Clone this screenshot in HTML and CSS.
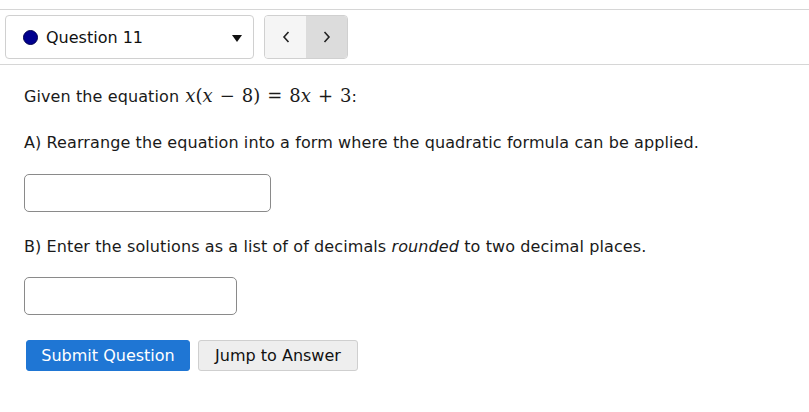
FILE: index.html
```html
<!DOCTYPE html>
<html>
<head>
<meta charset="utf-8">
<link rel="stylesheet" href="styles.css">
</head>
<body>
<div class="topbar">
  <div class="qselect">
    <span class="dot"></span>
    <span class="qlabel">Question 11</span>
    <span class="caret"></span>
  </div>
  <div class="nav">
    <button class="navbtn prev" aria-label="previous">
      <svg width="10" height="14" viewBox="0 0 10 14"><path d="M7.5 2 L3 7 L7.5 12" fill="none" stroke="#222" stroke-width="1.6"/></svg>
    </button>
    <button class="navbtn next" aria-label="next">
      <svg width="10" height="14" viewBox="0 0 10 14"><path d="M2.5 2 L7 7 L2.5 12" fill="none" stroke="#222" stroke-width="1.6"/></svg>
    </button>
  </div>
</div>
<div class="content">
  <p class="line first">Given the equation <span class="math"><span class="mi">x</span>(<span class="mi">x</span><span class="op">−</span>8)<span class="op">=</span>8<span class="mi">x</span><span class="op">+</span>3</span>:</p>
  <p class="line">A) Rearrange the equation into a form where the quadratic formula can be applied.</p>
  <div class="answer wide"></div>
  <p class="line lineb">B) Enter the solutions as a list of of decimals <em>rounded</em> to two decimal places.</p>
  <div class="answer narrow"></div>
  <div class="actions">
    <button class="btn primary">Submit Question</button>
    <button class="btn secondary">Jump to Answer</button>
  </div>
</div>
</body>
</html>
```
FILE: styles.css
```css
html, body {
  margin: 0;
  padding: 0;
  background: #fff;
}
body {
  font-family: "DejaVu Sans", sans-serif;
  font-size: 16px;
  letter-spacing: 0.1px;
  color: #1a1a1a;
}
.topbar {
  margin-top: 9px;
  border-top: 1px solid #d6d6d6;
  border-bottom: 1px solid #d6d6d6;
  padding: 5px 0 5px 5px;
  display: flex;
  gap: 10px;
}
.qselect {
  box-sizing: border-box;
  width: 249px;
  height: 44px;
  border: 1px solid #d0d0d0;
  border-radius: 4px;
  display: flex;
  align-items: center;
  padding-left: 17px;
  padding-right: 11px;
}
.dot {
  width: 15px;
  height: 15px;
  border-radius: 50%;
  background: #00008f;
  border: 1px solid #000050;
  box-sizing: border-box;
  margin-right: 8px;
}
.qlabel {
  flex: 1;
  font-size: 16px;
  letter-spacing: 0;
  color: #111;
}
.caret {
  width: 0;
  height: 0;
  border-left: 5px solid transparent;
  border-right: 5px solid transparent;
  border-top: 7px solid #111;
  margin-top: 2px;
}
.nav {
  display: flex;
  height: 44px;
  border: 1px solid #d0d0d0;
  border-radius: 4px;
  overflow: hidden;
  box-sizing: border-box;
}
.navbtn {
  width: 41px;
  height: 100%;
  border: 0;
  padding: 0;
  display: flex;
  align-items: center;
  justify-content: center;
}
.prev { background: #f5f5f5; }
.next { background: #dcdcdc; }
.content {
  padding-left: 24px;
}
.line {
  margin: 22px 0 0;
  line-height: 24px;
}
.line.first {
  margin-top: 19px;
}
.line.lineb {
  margin-top: 23px;
}
.math {
  font-family: "DejaVu Serif", "Liberation Serif", serif;
  font-size: 18px;
  letter-spacing: 0;
  margin-left: 1px;
}
.mi {
  font-family: "DejaVu Serif", serif;
  font-style: italic;
  font-size: 18px;
}
.op {
  margin: 0 7px;
}
.answer {
  box-sizing: border-box;
  height: 38px;
  border: 1px solid #8a8a8a;
  border-radius: 5px;
}
.wide { width: 247px; margin-top: 19px; }
.narrow { width: 213px; margin-top: 18px; }
.actions {
  margin-top: 25px;
  padding-left: 2px;
  display: flex;
  gap: 8px;
}
.btn {
  font-family: "DejaVu Sans", sans-serif;
  font-size: 16px;
  height: 31px;
  border-radius: 3px;
  padding: 0 10px;
  box-sizing: border-box;
}
.primary {
  width: 164px;
  background: #1f76d4;
  color: #fff;
  border: 1px solid #1f76d4;
}
.secondary {
  width: 160px;
  background: #eeeeee;
  color: #111;
  border: 1px solid #cfcfcf;
}
```
